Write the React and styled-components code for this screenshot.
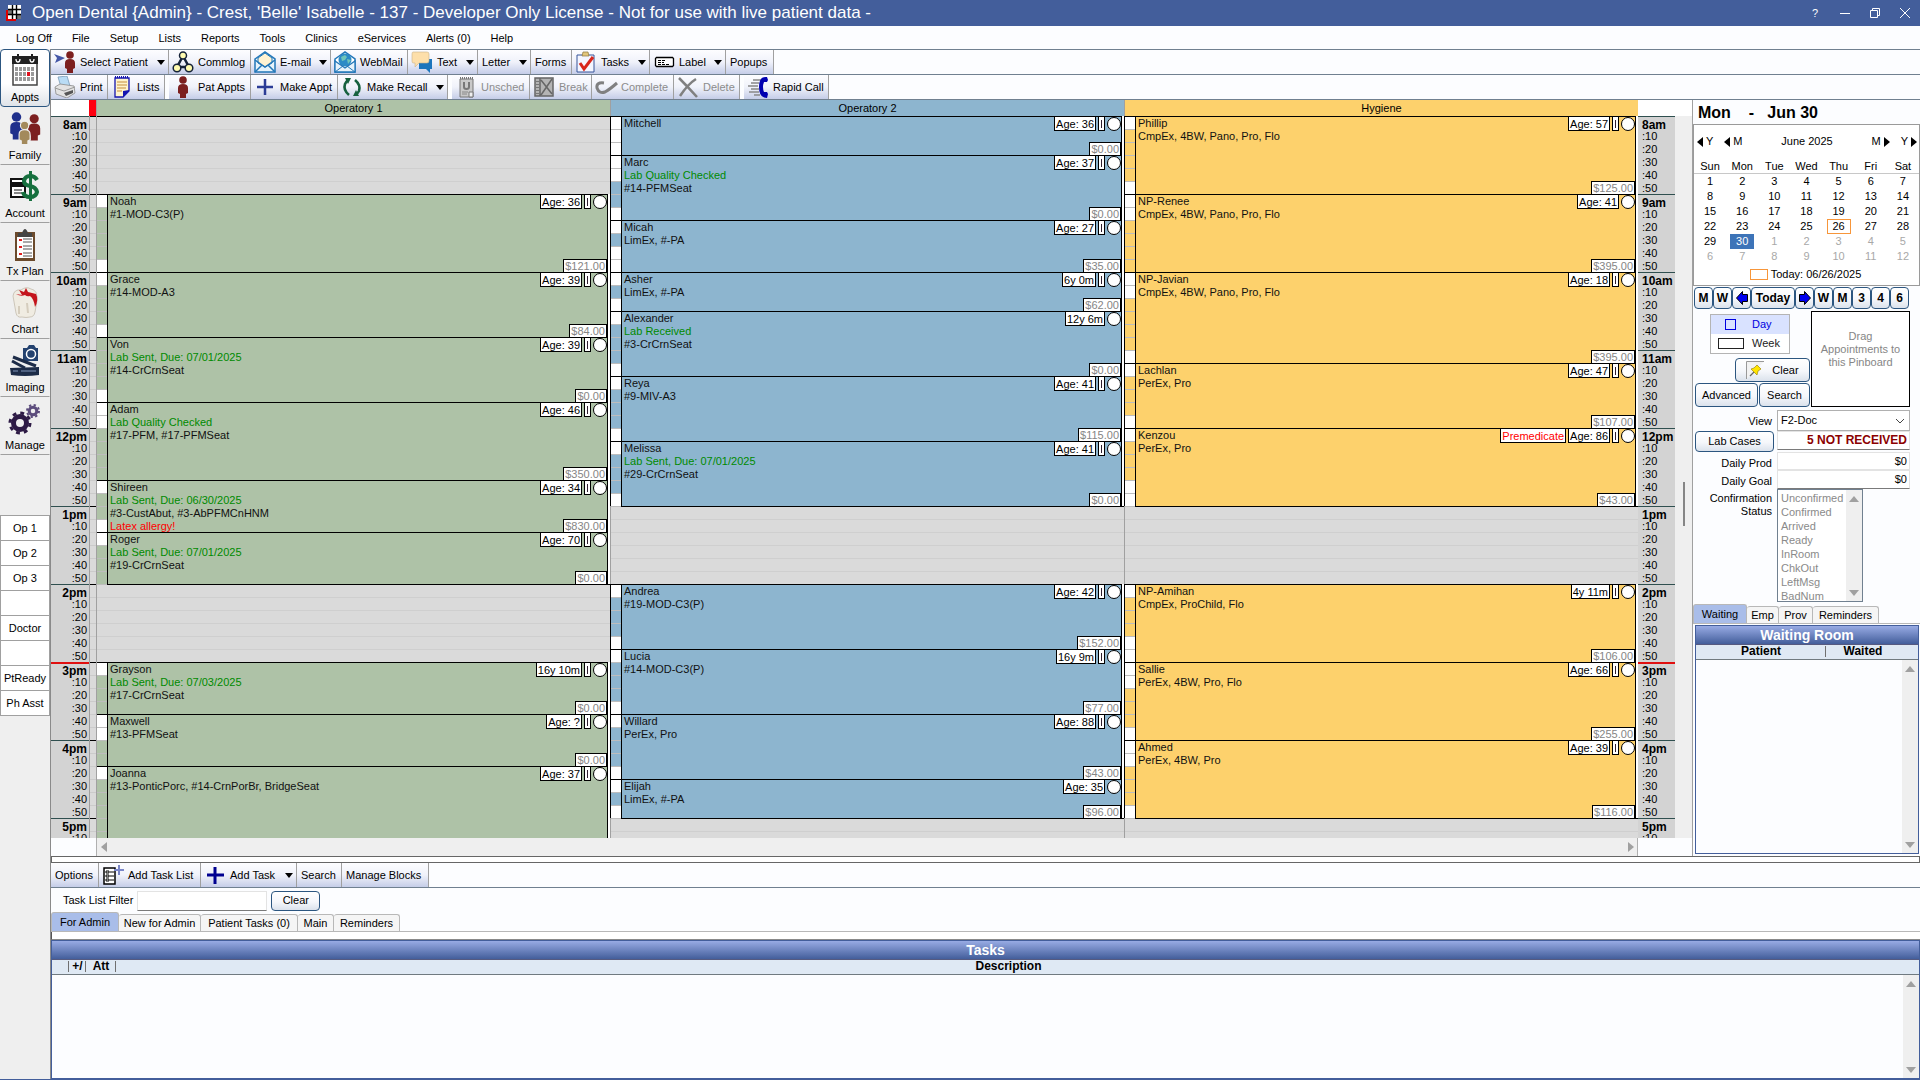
import React from 'react';
import styled, { createGlobalStyle } from 'styled-components';

const GREEN = '#aec2a7';
const BLUE = '#8db5cf';
const YELLOW = '#fdd16c';
const ROW = 13;

const GlobalStyle = createGlobalStyle`
    * {
        box-sizing: border-box;
    }
    body {
        margin: 0;
        overflow: hidden;
        background: #fcfdff;
        color: #000;
        font-family: "Liberation Sans", Arial, sans-serif;
        font-size: 11px;
        line-height: 13px;
    }
    button, input, select {
        font: inherit;
        color: inherit;
        margin: 0;
    }
    button {
        white-space: nowrap;
    }
    svg {
        display: block;
    }
`

const StyledWindow = styled.div`
    display: flex;
    flex-direction: column;
    height: 100vh;
    border-bottom: 1px solid #435e9b;
`

const StyledTitleBar = styled.header`
    display: flex;
    align-items: center;
    flex: 0 0 26px;
    padding: 0 0 0 6px;
    background: #435e9b;
    color: #fff;
`

const StyledTitle = styled.h1`
    flex: 1;
    margin: 0 0 0 11px;
    font-size: 17px;
    line-height: 24px;
    font-weight: normal;
    white-space: nowrap;
`

const StyledWindowButton = styled.button`
    display: flex;
    align-items: center;
    justify-content: center;
    width: 30px;
    height: 26px;
    padding: 0;
    border: 0;
    background: none;
    color: #fff;
`

const StyledMenu = styled.nav`
    display: flex;
    align-items: center;
    flex: 0 0 23px;
    padding-left: 6px;
    background: #fcfdff;
`

const StyledMenuLink = styled.a`
    padding: 1px 10px 0;
    color: #000;
    text-decoration: none;
`

const StyledBody = styled.div`
    display: flex;
    flex: 1;
    min-height: 0;
`

const StyledSidebar = styled.aside`
    flex: 0 0 51px;
    background: #efefef;
    border-right: 1px solid #8a8a8a;
`

const StyledModule = styled.button`
    display: flex;
    flex-direction: column;
    align-items: center;
    justify-content: space-between;
    width: 100%;
    height: 58px;
    padding: 4px 0 2px;
    background: ${props => props.$active ? 'linear-gradient(#fff 60%, #dfe3e8)' : 'none'};
    border: 1px solid ${props => props.$active ? '#2c5680' : 'transparent'};
    border-bottom-color: ${props => props.$active ? '#2c5680' : '#a0a0a0'};
    border-radius: ${props => props.$active ? '4px' : '0'};
`

const StyledShortcuts = styled.div`
    margin-top: 60px;
    border-top: 1px solid #a0a0a0;
`

const StyledShortcut = styled.button`
    display: block;
    width: 100%;
    height: 25px;
    padding: 0;
    background: #fff;
    border: 1px solid #a0a0a0;
    border-top: 0;
`

const StyledMain = styled.main`
    display: flex;
    flex-direction: column;
    flex: 1;
    min-width: 0;
`

const StyledToolbar = styled.div`
    display: flex;
    flex: 0 0 25px;
    background: #fcfdff;
    border-top: ${props => props.$last ? '0' : '1px solid #708090'};
    border-bottom: ${props => props.$last ? '1px solid #708090' : '0'};
`

const StyledToolButton = styled.button`
    display: flex;
    align-items: center;
    flex: 0 0 ${props => props.$width}px;
    height: 24px;
    padding: 0 0 0 ${props => props.$icon ? 0 : 4}px;
    margin-right: ${props => props.$gap || 0}px;
    border: 0;
    border-right: 1px solid #a0a0a0;
    background: linear-gradient(#fdfdff, #f0f2fa 50%, #c5cde8);
    &:disabled {
        color: #8c8c8c;
    }
`

const StyledToolIcon = styled.span`
    display: flex;
    justify-content: center;
    flex: 0 0 29px;
    padding-right: 2px;
`

const StyledCaret = styled.i`
    margin-left: auto;
    margin-right: 3px;
    border: 4px solid transparent;
    border-top: 5px solid #000;
    border-bottom: 0;
`

const StyledUpper = styled.div`
    display: flex;
    flex: 1;
    min-height: 0;
    border-top: 1px solid #708090;
`

const StyledSchedule = styled.section`
    display: flex;
    flex-direction: column;
    flex: 1;
    min-width: 0;
`

const StyledOpHeaders = styled.div`
    display: flex;
    flex: 0 0 16px;
    padding-right: 54px;
    background: #fff;
`

const StyledCorner = styled.div`
    flex: 0 0 45px;
    border-right: 7px solid #ff0010;
`

const StyledOpHeader = styled.div`
    flex: 1;
    text-align: center;
    line-height: 16px;
    background: ${props => props.$color};
    border-left: 1px solid #a0a0a0;
`

const StyledGrid = styled.div`
    display: flex;
    flex: 1;
    min-height: 0;
    overflow: hidden;
`

const StyledTimes = styled.div`
    flex: 0 0 ${props => props.$right ? 37 : 38}px;
    background: #d3d3d3;
    text-align: ${props => props.$right ? 'left' : 'right'};
`

const StyledTime = styled.div`
    height: ${ROW}px;
    padding: ${props => props.$right ? '0 0 0 4px' : '0 2px 0 0'};
    border-top: 1px solid ${props => props.$now ? '#e01010' : props.$hour ? '#2f4f4f' : 'transparent'};
    box-shadow: ${props => props.$now ? 'inset 0 1px #e01010' : 'none'};
    font-size: ${props => props.$hour ? 12 : 11}px;
    font-weight: ${props => props.$hour ? 'bold' : 'normal'};
    line-height: ${props => props.$hour ? 16 : 13}px;
`

const StyledProvColumn = styled.div`
    flex: 0 0 7px;
    border-left: 1px solid #a0a0a0;
    background: repeating-linear-gradient(#000 0 1px, transparent 1px 78px),
        repeating-linear-gradient(#cbcbcb 0 1px, #dadada 1px 13px);
`

const StyledOperatory = styled.div`
    flex: 1;
    min-width: 0;
`

const StyledClosed = styled.div`
    height: ${props => props.$rows * ROW}px;
    border-left: 1px solid #a0a0a0;
    background: linear-gradient(#000 0 1px, transparent 1px),
        repeating-linear-gradient(#cfcfcf 0 1px, #dadada 1px 13px);
`

const StyledAppt = styled.article`
    display: flex;
    height: ${props => props.$rows * ROW}px;
    padding-right: 2px;
    border-left: 1px solid ${props => props.$first ? '#a0a0a0' : '#000'};
    background: #fff;
`

const StyledBar = styled.div`
    flex: 0 0 10px;
    border-top: 1px solid #000;
`

const StyledBarRow = styled.div`
    height: ${ROW}px;
    background: ${props => props.$color};
    border-bottom: 1px solid #bdbdbd;
`

const StyledApptBody = styled.div`
    position: relative;
    flex: 1;
    padding-left: 2px;
    overflow: hidden;
    white-space: nowrap;
    background: ${props => props.$color};
    border: 1px solid #000;
    border-bottom: 0;
`

const StyledApptLine = styled.div`
    color: ${props => props.$color || '#111'};
`

const StyledTags = styled.div`
    position: absolute;
    top: 0;
    right: 0;
    display: flex;
    gap: 2px;
`

const StyledTag = styled.span`
    height: 14px;
    padding: 0 1px;
    line-height: 14px;
    background: #fff;
    border: 1px solid #000;
    border-top: 0;
    color: ${props => props.$color || '#000'};
`

const StyledTick = styled.span`
    width: 7px;
    height: 14px;
    background: linear-gradient(#302030, #302030) center / 1px 8px no-repeat #fff;
    border: 1px solid #000;
    border-top: 0;
`

const StyledCircle = styled.span`
    width: 14px;
    height: 14px;
    background: #fff;
    border: 1px solid #000;
    border-radius: 50%;
`

const StyledAmount = styled.span`
    position: absolute;
    right: 0;
    bottom: 0;
    height: 13px;
    padding: 0 1px;
    line-height: 13px;
    background: #fff;
    border: 1px solid #000;
    border-bottom: 0;
    color: #858585;
`

const StyledVScroll = styled.div`
    display: flex;
    align-items: center;
    justify-content: center;
    flex: 0 0 17px;
    background: #efefef;
`

const StyledThumb = styled.i`
    width: 2px;
    height: 44px;
    margin-bottom: -54px;
    background: #858585;
`

const StyledHScroll = styled.div`
    display: flex;
    align-items: center;
    justify-content: space-between;
    flex: 0 0 18px;
    margin: 0 54px 0 45px;
    padding: 0 3px 0 4px;
    background: #efefef;
    border: 1px solid #b0b0b0;
    border-width: 0 1px;
`

const StyledArrow = styled.i`
    border: 5px solid transparent;
    ${props => props.$dir === 'left' && 'border-right: 6px solid #a0a0a0; border-left: 0;'}
    ${props => props.$dir === 'right' && 'border-left: 6px solid #a0a0a0; border-right: 0;'}
    ${props => props.$dir === 'up' && 'border-bottom: 6px solid #a0a0a0; border-top: 0;'}
    ${props => props.$dir === 'down' && 'border-top: 6px solid #a0a0a0; border-bottom: 0;'}
    ${props => props.$dark && 'border-left-color: #000; border-right-color: #000;'}
`

const StyledPanel = styled.aside`
    display: flex;
    flex-direction: column;
    flex: 0 0 228px;
    border-left: 1px solid #a0a0a0;
    background: #fcfdff;
`

const StyledDate = styled.h2`
    margin: 0;
    padding: 4px 0 2px 5px;
    font-size: 16px;
    line-height: 18px;
    white-space: pre;
`

const StyledCalendar = styled.div`
    flex: 0 0 162px;
    border: 1px solid #9a9a9a;
    background: #fff;
`

const StyledCalNav = styled.div`
    display: flex;
    align-items: center;
    gap: 11px;
    padding: 10px 2px 10px 3px;
`

const StyledNavButton = styled.button`
    display: flex;
    align-items: center;
    gap: 3px;
    padding: 0;
    border: 0;
    background: none;
`

const StyledMonth = styled.span`
    flex: 1;
    text-align: center;
`

const StyledDays = styled.table`
    width: 100%;
    table-layout: fixed;
    border-collapse: collapse;
    text-align: center;
    th {
        padding: 2px 0 0;
        font-weight: normal;
        border-bottom: 1px solid #c8c8c8;
    }
`

const StyledDay = styled.td`
    height: 15px;
    padding: 0;
    color: ${props => props.$other ? '#a8a8a8' : '#000'};
    span {
        display: inline-block;
        width: 24px;
        height: 15px;
        line-height: 15px;
        color: ${props => props.$selected ? '#fff' : 'inherit'};
        background: ${props => props.$selected ? '#3d74b8' : 'none'};
        box-shadow: ${props => props.$today ? 'inset 0 0 0 1px #f7963a' : 'none'};
    }
`

const StyledToday = styled.div`
    display: flex;
    align-items: center;
    justify-content: center;
    gap: 3px;
    padding: 4px 2px 0 0;
    i {
        width: 18px;
        height: 11px;
        border: 1px solid #f7963a;
    }
`

const StyledButton = styled.button`
    display: flex;
    align-items: center;
    justify-content: center;
    gap: 8px;
    width: ${props => props.$width ? props.$width + 'px' : '100%'};
    height: ${props => props.$height || 22}px;
    padding: 0;
    border: 1px solid #2c5680;
    border-radius: 4px;
    background: linear-gradient(#fff, #f5f7fb 55%, #dbe2ec);
    font-size: ${props => props.$bold ? 12 : 11}px;
    font-weight: ${props => props.$bold ? 'bold' : 'normal'};
`

const StyledJumpRow = styled.div`
    display: flex;
    margin: 1px 0 0 1px;
`

const StyledViewTools = styled.div`
    display: flex;
    justify-content: space-between;
    margin: 2px 10px 3px 2px;
`

const StyledViewLeft = styled.div`
    display: flex;
    flex-direction: column;
    align-items: flex-end;
    width: 115px;
    padding-top: 3px;
`

const StyledRange = styled.div`
    width: 80px;
    margin: 0 20px 4px 0;
    border: 1px solid #b4b4b4;
    background: #fff;
`

const StyledRangeOption = styled.button`
    display: flex;
    align-items: center;
    gap: ${props => props.$day ? 16 : 8}px;
    width: 100%;
    height: 19px;
    padding: 0 0 0 ${props => props.$day ? 14 : 7}px;
    border: 0;
    background: ${props => props.$day ? '#d9e2ff' : '#fff'};
    color: ${props => props.$day ? '#0000e0' : '#222'};
    i {
        width: ${props => props.$day ? 11 : 26}px;
        height: 11px;
        border: 1px solid currentColor;
    }
`

const StyledButtonPair = styled.div`
    display: flex;
    justify-content: space-between;
    width: 100%;
    margin-top: 1px;
`

const StyledPinboard = styled.div`
    width: 99px;
    height: 96px;
    padding: 18px 6px;
    border: 1px solid #000;
    background: #fff;
    color: #868686;
    text-align: center;
`

const StyledFields = styled.div`
    display: grid;
    grid-template-columns: 79px 133px;
    grid-template-rows: 21px 21px 18px 19px 113px;
    column-gap: 3px;
    margin-left: 2px;
    text-align: right;
`

const StyledLabel = styled.label`
    padding: ${props => props.$top || 5}px 2px 0 0;
`

const StyledSelect = styled.select`
    width: 100%;
    height: 21px;
    padding: 0 3px;
    border: 1px solid #b0b0b0;
    border-radius: 0;
    appearance: none;
    background: #fff url("data:image/svg+xml,%3Csvg xmlns='http://www.w3.org/2000/svg' width='10' height='6'%3E%3Cpath d='M1 1l4 4 4-4' fill='none' stroke='%23444'/%3E%3C/svg%3E") no-repeat right 4px center;
`

const StyledInput = styled.input`
    width: ${props => props.$width ? props.$width + 'px' : '100%'};
    height: ${props => props.$height || 19}px;
    padding: 0 2px 1px;
    border: 1px solid #e3e3e3;
    border-bottom-color: ${props => props.$flat ? '#e3e3e3' : '#7a7a7a'};
    background: #fff;
    outline: 0;
    text-align: right;
    font-size: ${props => props.$alert ? 12 : 11}px;
    font-weight: ${props => props.$alert ? 'bold' : 'normal'};
    color: ${props => props.$alert ? '#8b0000' : '#000'};
`

const StyledListBox = styled.div`
    display: flex;
    width: 86px;
    height: 113px;
    border: 1px solid #708090;
    background: #fff;
    select {
        flex: 1;
        min-width: 0;
        height: 111px;
        padding: 2px 0 0;
        border: 0;
        outline: 0;
        overflow: hidden;
        background: #fff;
        color: #8a8a8a;
        opacity: 1;
        scrollbar-width: none;
    }
    option {
        padding: 0 0 0 3px;
        min-height: 14px;
        line-height: 14px;
        color: #8a8a8a;
    }
`

const StyledScroll = styled.div`
    display: flex;
    flex-direction: column;
    align-items: center;
    justify-content: space-between;
    flex: 0 0 16px;
    padding: 6px 0 5px;
    background: #efefef;
`

const StyledTabs = styled.div`
    display: flex;
    align-items: flex-end;
    flex: 0 0 19px;
    margin-top: ${props => props.$top || 0}px;
    border-bottom: 1px solid #b8b8b8;
`

const StyledTab = styled.button`
    width: ${props => props.$width}px;
    height: ${props => props.$active ? 19 : 17}px;
    padding: 0;
    border: 1px solid #b8b8b8;
    border-left-width: ${props => props.$active ? 1 : 0}px;
    border-bottom: 0;
    border-radius: 3px 3px 0 0;
    background: ${props => props.$active ? '#a9bde9' : '#f5f5f5'};
`

const StyledFrame = styled.div`
    display: flex;
    flex-direction: column;
    flex: 1;
    margin: ${props => props.$inset ? '1px 1px 2px 2px' : '0'};
    border: 1px solid #435e9b;
    background: #fcfdff;
`

const StyledFrameTitle = styled.h3`
    flex: 0 0 18px;
    margin: 0;
    border-bottom: 1px solid #565a80;
    background: linear-gradient(#98abe4, #435e9b);
    color: #fff;
    font-size: 14px;
    line-height: 18px;
    text-align: center;
`

const StyledColumns = styled.table`
    width: 100%;
    table-layout: fixed;
    border-collapse: collapse;
    background: #dfe9f4;
    border-bottom: 1px solid #707a80;
    th {
        height: 14px;
        padding: 0;
        font-size: 12px;
        line-height: 13px;
        background: linear-gradient(#707070, #707070) right center / 1px 11px no-repeat;
    }
    th:last-child {
        background: none;
        padding-right: ${props => props.$scroll || 0}px;
    }
`

const StyledFrameBody = styled.div`
    display: flex;
    justify-content: flex-end;
    flex: 1;
`

const StyledTasks = styled.section`
    display: flex;
    flex-direction: column;
    flex: 0 0 223px;
`

const StyledSplitter = styled.div`
    flex: 0 0 7px;
    border: 1px solid #666;
    background: #fff;
`

const StyledFilter = styled.form`
    display: flex;
    align-items: center;
    flex: 0 0 24px;
    padding: 1px 0 0 12px;
    gap: 4px;
    input {
        text-align: left;
    }
`

const StyledStrip = styled.div`
    flex: 0 0 8px;
    border-left: 1px solid #555;
    border-bottom: 1px solid #8a8a8a;
    background: #fff;
`

const Svg = ({ w = 22, h = 22, box, children }) => (
    <svg width={w} height={h} viewBox={box || `0 0 ${w} ${h}`} fill="none" aria-hidden="true">{children}</svg>
)

const Person = ({ x = 0, y = 0, color, scale = 1 }) => (
    <g transform={`translate(${x} ${y}) scale(${scale})`} fill={color}>
        <circle cx="6" cy="4" r="3.800" />
        <path d="M1 12q0-4 5-4t5 4v5l-2 1v4H3v-4l-2-1z" />
    </g>
)

const icons = {
    app: (
        <Svg w={15} h={16}>
            <path fill="#fff" d="M2 0h13v14H2z" />
            <path fill="#777" d="M2 5h4v4H2zM11 9h4v5h-4z" />
            <path stroke="#000" strokeWidth="1.400" d="M6.500 0v14M10.500 0v14M2 4.500h13M2 9.500h13" />
            <path stroke="#e00000" strokeWidth="2" d="M1 5v10h9" />
        </Svg>
    ),
    select: <Svg w={24}><path fill="#4457a8" d="M1 3l11 4-10 5 2-5z" /><Person x={11} color="#7c1f1f" /></Svg>,
    person: <Svg><Person x={5} color="#7c1f1f" /></Svg>,
    commlog: (
        <Svg>
            <path stroke="#152238" strokeWidth="2.500" d="M11 5L5 16h12z" />
            <g fill="#fffbb0" stroke="#152238" strokeWidth="1.500">
                <circle cx="11" cy="4.500" r="3.500" /><circle cx="5" cy="17" r="3.800" /><circle cx="17" cy="17" r="3.800" />
            </g>
        </Svg>
    ),
    email: (
        <Svg>
            <path fill="#e6f3fb" stroke="#2277b8" strokeWidth="1.500" d="M1 8l10-7 10 7v13H1z" />
            <path fill="#fff3d2" stroke="#2277b8" d="M4 7l7-5 7 5v5l-7 4-7-4z" />
            <path stroke="#2277b8" strokeWidth="1.500" d="M1 21l7-7M21 21l-7-7M1 9l10 7 10-7" />
        </Svg>
    ),
    webmail: (
        <Svg>
            <path fill="#fff" stroke="#2277b8" strokeWidth="1.500" d="M1 8l10-7 10 7v13H1z" />
            <circle cx="11" cy="9" r="6.500" fill="#2b8bc6" />
            <path fill="#6fc5b8" d="M7 6l4-2 2 2-2 3-3 1zM13 8l4 1-3 4z" />
            <path fill="#e6f3fb" stroke="#2277b8" strokeWidth="1.300" d="M1 21V10l10 7 10-7v11z" />
            <path stroke="#2277b8" d="M1 21l8-6M21 21l-8-6" />
        </Svg>
    ),
    text: (
        <Svg>
            <path fill="#1c75bc" d="M8 8h13v10h-2v4l-4-4H8z" />
            <path fill="#fddfaa" stroke="#c9b48a" strokeWidth=".6" d="M2 1h14q2 0 2 2v7q0 2-2 2H8l-4 4v-4H2q-1 0-1-2V3q0-2 1-2z" />
        </Svg>
    ),
    tasks: (
        <Svg>
            <path fill="#f4f6ff" stroke="#36549a" d="M2 4h17v17H2z" />
            <path fill="#e2c67c" stroke="#8c753c" strokeWidth=".7" d="M7 5l1-4h5l1 4z" />
            <path stroke="#d9261c" strokeWidth="3" d="M5 12l4 6 9-12" />
        </Svg>
    ),
    label: <Svg><path fill="#fff" stroke="#000" strokeWidth="1.300" d="M3.500 6.500h16l1 1v7l-1 1h-16l-1-1v-7z" /><path stroke="#000" strokeDasharray="3 1" d="M5 9.500h8M5 11.500h6M5 13.500h12" /></Svg>,
    print: (
        <Svg>
            <path fill="#b9dcf5" stroke="#6b8fae" strokeWidth=".7" d="M4 1l9-1 3 10-9 1z" />
            <path fill="#e3e3e3" stroke="#8a8a8a" strokeWidth=".8" d="M1 11l5-3 14 2 1 7-8 5-11-4z" />
            <path fill="#555" d="M10 17l9-3v3l-7 3z" /><path stroke="#999" d="M1 12l9 3 11-4" />
        </Svg>
    ),
    lists: (
        <Svg>
            <path fill="#fff4cc" stroke="#1515b0" strokeWidth="1.300" d="M4 2h14v13l-6 6H4z" />
            <path fill="#1515b0" d="M18 14v1l-6 6v-6z" /><path stroke="#1515b0" strokeDasharray="1 1" strokeWidth="2" d="M4 1h14" />
            <path stroke="#c58d3c" d="M6 6h10M6 9h10M6 12h9M6 15h5" />
        </Svg>
    ),
    plus: <Svg><path stroke="#2b3c96" strokeWidth="2.500" d="M11 3v16M3 11h16" /></Svg>,
    recall: (
        <Svg>
            <path stroke="#17613f" strokeWidth="2.600" d="M8 19Q2 14 4 8q1-2 3-4M14 4q6 5 4 11-1 2-3 3" />
            <path fill="#17613f" d="M4 2h6l-3 6zM18 20h-6l3-6z" />
        </Svg>
    ),
    unsched: <Svg><path fill="#c9c9c9" stroke="#777" d="M5 3h13v18H5z" /><path stroke="#777" strokeWidth="2" strokeDasharray="1 1" d="M5 2h13" /><path stroke="#777" strokeWidth="2" d="M9 6v5q0 2 2.500 2T14 11V6" /><path stroke="#888" d="M7 16h6M7 18h5" /><path fill="#eee" stroke="#777" d="M14 16h4v5h-4z" /></Svg>,
    break: <Svg><path fill="#b4b4b4" stroke="#666" strokeWidth="1.500" d="M2 2h18v18H2z" /><path stroke="#666" strokeWidth="1.500" d="M7 2v18M8 4l11 14M19 3L8 19" /><path stroke="#777" strokeWidth="3" strokeDasharray="1 2" d="M4.500 2v18" /></Svg>,
    complete: <Svg w={24}><path stroke="#808080" strokeWidth="3" d="M10 7Q2 6 3 12q2 6 8 4 4-2 12-9" /></Svg>,
    delete: <Svg w={24}><path stroke="#808080" strokeWidth="2.500" d="M3 2q9 9 18 19M20 3Q12 8 4 20" /></Svg>,
    rapid: (
        <Svg>
            <path stroke="#888" strokeWidth="1.300" d="M6 4h8M4 7h8M1 10h10M4 13h8M2 16h10M7 19h6" />
            <path fill="#0000b0" d="M20 1q-8-1-8 10t8 11l1-4-1-2h-3q-2-5 0-10h3l1-2z" />
        </Svg>
    ),
    taskList: (
        <Svg>
            <path fill="#fff" stroke="#000" strokeWidth="1.500" d="M2 4h11v16H2z" />
            <path stroke="#000" d="M4 7h3v2H4zM4 11h3v2H4zM4 15h3v2H4zM8 8h4M8 12h4M8 16h4" />
            <path stroke="#7a86c8" strokeWidth="2" d="M17 1v10M12 6h10" />
        </Svg>
    ),
    addTask: <Svg><path stroke="#000090" strokeWidth="3" d="M11 3v17M3 11h17" /></Svg>,
    pin: (
        <Svg w={18} h={18}>
            <path fill="#f2f2f2" stroke="#999" d="M.5 18V.5H18" />
            <path stroke="#666" strokeWidth="1.300" d="M4 15l5-5" />
            <path fill="#ffe400" stroke="#a08a10" strokeWidth=".7" d="M5 8l3-1 3-3 4 4-3 2-1 4z" />
        </Svg>
    ),
    appts: (
        <Svg w={32} h={32}>
            <path fill="#fff" stroke="#444" strokeWidth="1.500" d="M4 4h24v27H4z" />
            <path fill="#222" d="M3 2h26v8H3z" />
            <path stroke="#fff" strokeWidth="1.300" d="M7 5q0 3 2 3t2-3M21 5q0 3 2 3t2-3" />
            <path stroke="#222" strokeWidth="2" d="M9 0v6M23 0v6" />
            {[0, 1, 2].map(r => [0, 1, 2, 3, 4].map(c => (
                <path key={`${r}${c}`} fill={r === 1 && c === 3 ? '#e0101c' : '#9a9a9a'} d={`M${6 + c * 4} ${13 + r * 5}h3v4h-3z`} />
            )))}
        </Svg>
    ),
    family: (
        <Svg w={32} h={32}>
            <Person x={0} color="#20308c" scale={1.25} />
            <Person x={18} y={2} color="#7c1f1f" scale={1.2} />
            <g stroke="#efefef" strokeWidth="1"><Person x={9} y={9} color="#a38a5c" scale={1.1} /></g>
        </Svg>
    ),
    account: (
        <Svg w={34} h={32}>
            <path fill="#fff" stroke="#111" strokeWidth="2" d="M3 9h14v18H3z" />
            <path fill="#111" d="M3 12h14v5H3z" /><path stroke="#111" d="M6 20h8M6 23h8" />
            <path stroke="#efefef" strokeWidth="8" d="M22 3v27" />
            <path stroke="#16703e" strokeWidth="4" d="M29 10q-2-4-7-4t-6 5q0 4 6 5t7 6q-1 5-7 5t-7-5" />
            <path stroke="#16703e" strokeWidth="3" d="M22.500 1v30" />
        </Svg>
    ),
    txplan: (
        <Svg w={32} h={34}>
            <path fill="#6b4a2c" d="M6 4h20v29H6z" /><path fill="#fff" d="M8 9h16v21H8z" />
            <path fill="#444" d="M9 9V5h4q3-8 6 0h4v4z" />
            <path stroke="#e02020" strokeWidth="2" d="M10 12h3M10 19h3M10 26h3" />
            <path stroke="#555" d="M14 11h9M14 14h9M14 18h9M14 21h9M14 25h9M14 28h9" />
        </Svg>
    ),
    chart: (
        <Svg w={30} h={32}>
            <path fill="#f0ece2" stroke="#bdb5a5" strokeWidth=".7" d="M3 10Q4 3 11 4q5-4 10-1 7 1 6 12l-2 11q-1 5-5 5-4 1-8 0-5 1-6-4z" />
            <path fill="#c4141c" d="M6 8l6 1-3-5 5 2 2-4 2 4 8 2q3 6-1 13-1-8-5-11-3 1-5-1-4 2-9-1z" />
            <path stroke="#d5cdbd" strokeWidth="2" d="M9 20v8M17 17l1 10" />
        </Svg>
    ),
    imaging: (
        <Svg w={32} h={34}>
            <path fill="#24426f" d="M14 4h4l2-3h5l2 3h2v13H14z" />
            <circle cx="22" cy="10" r="4.500" fill="#24426f" stroke="#fff" strokeWidth="1.500" />
            <path stroke="#1d2c48" strokeWidth="3" d="M4 13l23 9M3 17l13 7" />
            <path fill="#1d2c48" d="M1 24l29-1v8q-14 2-28 0z" /><path stroke="#8094b8" d="M4 27h5M12 27h15" />
        </Svg>
    ),
    manage: (
        <Svg w={34} h={34}>
            <circle cx="12" cy="21" r="6.500" stroke="#2d1a45" strokeWidth="5" />
            <circle cx="12" cy="21" r="10" stroke="#2d1a45" strokeWidth="3" strokeDasharray="3.850 4" />
            <circle cx="25" cy="9" r="3.800" stroke="#5c4c7c" strokeWidth="3" />
            <circle cx="25" cy="9" r="6" stroke="#5c4c7c" strokeWidth="2" strokeDasharray="2.300 2.400" />
        </Svg>
    ),
    next: <Svg w={14} h={14}><path fill="#0000f0" stroke="#000" d="M1.500 3.500h5v-3l6 6.500-6 6.500v-3h-5z" /></Svg>,
    prev: <Svg w={14} h={14}><path fill="#0000f0" stroke="#000" d="M12.500 3.500h-5v-3L1.500 7l6 6.500v-3h5z" /></Svg>,
}

const menuItems = ['Log Off', 'File', 'Setup', 'Lists', 'Reports', 'Tools', 'Clinics', 'eServices', 'Alerts (0)', 'Help'];

const modules = [
    ['Appts', 'appts'], ['Family', 'family'], ['Account', 'account'], ['Tx Plan', 'txplan'],
    ['Chart', 'chart'], ['Imaging', 'imaging'], ['Manage', 'manage'],
];

const shortcuts = ['Op 1', 'Op 2', 'Op 3', '', 'Doctor', '', 'PtReady', 'Ph Asst'];

const mainTools = [
    { label: 'Select Patient', icon: 'select', width: 118, menu: true },
    { label: 'Commlog', icon: 'commlog', width: 82 },
    { label: 'E-mail', icon: 'email', width: 80, menu: true },
    { label: 'WebMail', icon: 'webmail', width: 77 },
    { label: 'Text', icon: 'text', width: 70, menu: true },
    { label: 'Letter', width: 53, menu: true },
    { label: 'Forms', width: 41 },
    { label: 'Tasks', icon: 'tasks', width: 78, menu: true },
    { label: 'Label', icon: 'label', width: 76, menu: true },
    { label: 'Popups', width: 48 },
];

const apptTools = [
    { label: 'Print', icon: 'print', width: 57 },
    { label: 'Lists', icon: 'lists', width: 57, gap: 4 },
    { label: 'Pat Appts', icon: 'person', width: 82 },
    { label: 'Make Appt', icon: 'plus', width: 87 },
    { label: 'Make Recall', icon: 'recall', width: 110, menu: true, gap: 4 },
    { label: 'Unsched', icon: 'unsched', width: 78, disabled: true },
    { label: 'Break', icon: 'break', width: 62, disabled: true },
    { label: 'Complete', icon: 'complete', width: 82, disabled: true },
    { label: 'Delete', icon: 'delete', width: 66, disabled: true, gap: 4 },
    { label: 'Rapid Call', icon: 'rapid', width: 85 },
];

const taskTools = [
    { label: 'Options', width: 48 },
    { label: 'Add Task List', icon: 'taskList', width: 102 },
    { label: 'Add Task', icon: 'addTask', width: 96, menu: true },
    { label: 'Search', width: 45 },
    { label: 'Manage Blocks', width: 87 },
];

// bar: w = open time, x = provider time, one letter per ten minutes
const closed = rows => ({ closed: rows });
const appt = (name, bar, age, amount, procs, extra) => ({ name, bar, age, amount, procs, ...extra });

const operatories = [
    {
        name: 'Operatory 1',
        color: GREEN,
        items: [
            closed(6),
            appt('Noah', 'wxxxxw', 'Age: 36', '$121.00', '#1-MOD-C3(P)'),
            appt('Grace', 'wxxxw', 'Age: 39', '$84.00', '#14-MOD-A3'),
            appt('Von', 'xxxxw', 'Age: 39', '$0.00', '#14-CrCrnSeat', { lab: 'Lab Sent, Due: 07/01/2025' }),
            appt('Adam', 'wwxxxx', 'Age: 46', '$350.00', '#17-PFM, #17-PFMSeat', { lab: 'Lab Quality Checked' }),
            appt('Shireen', 'wxxw', 'Age: 34', '$830.00', '#3-CustAbut, #3-AbPFMCnHNM', { lab: 'Lab Sent, Due: 06/30/2025', alert: 'Latex allergy!' }),
            appt('Roger', 'wxxx', 'Age: 70', '$0.00', '#19-CrCrnSeat', { lab: 'Lab Sent, Due: 07/01/2025' }),
            closed(6),
            appt('Grayson', 'wxxx', '16y 10m', '$0.00', '#17-CrCrnSeat', { lab: 'Lab Sent, Due: 07/03/2025' }),
            appt('Maxwell', 'wwxx', 'Age: ?', '$0.00', '#13-PFMSeat'),
            appt('Joanna', 'wxxxxxxx', 'Age: 37', null, '#13-PonticPorc, #14-CrnPorBr, BridgeSeat'),
        ],
    },
    {
        name: 'Operatory 2',
        color: BLUE,
        items: [
            appt('Mitchell', 'www', 'Age: 36', '$0.00', ''),
            appt('Marc', 'wwxxw', 'Age: 37', '$0.00', '#14-PFMSeat', { lab: 'Lab Quality Checked' }),
            appt('Micah', 'wxww', 'Age: 27', '$35.00', 'LimEx, #-PA'),
            appt('Asher', 'wxw', '6y 0m', '$62.00', 'LimEx, #-PA'),
            appt('Alexander', 'wxxxw', '12y 6m', '$0.00', '#3-CrCrnSeat', { lab: 'Lab Received', noTick: true }),
            appt('Reya', 'wxxxw', 'Age: 41', '$115.00', '#9-MIV-A3'),
            appt('Melissa', 'wxxxw', 'Age: 41', '$0.00', '#29-CrCrnSeat', { lab: 'Lab Sent, Due: 07/01/2025' }),
            closed(6),
            appt('Andrea', 'wxxxw', 'Age: 42', '$152.00', '#19-MOD-C3(P)'),
            appt('Lucia', 'wxxxw', '16y 9m', '$77.00', '#14-MOD-C3(P)'),
            appt('Willard', 'wxxxw', 'Age: 88', '$43.00', 'PerEx, Pro'),
            appt('Elijah', 'wxw', 'Age: 35', '$96.00', 'LimEx, #-PA', { noTick: true }),
            closed(3),
        ],
    },
    {
        name: 'Hygiene',
        color: YELLOW,
        items: [
            appt('Phillip', 'wxxxxw', 'Age: 57', '$125.00', 'CmpEx, 4BW, Pano, Pro, Flo'),
            appt('NP-Renee', 'wwxxxx', 'Age: 41', '$395.00', 'CmpEx, 4BW, Pano, Pro, Flo', { noTick: true }),
            appt('NP-Javian', 'wwxxxxw', 'Age: 18', '$395.00', 'CmpEx, 4BW, Pano, Pro, Flo'),
            appt('Lachlan', 'wxxxw', 'Age: 47', '$107.00', 'PerEx, Pro'),
            appt('Kenzou', 'wxxxww', 'Age: 86', '$43.00', 'PerEx, Pro', { flag: 'Premedicate' }),
            closed(6),
            appt('NP-Amihan', 'wxxxww', '4y 11m', '$106.00', 'CmpEx, ProChild, Flo'),
            appt('Sallie', 'wwxxxw', 'Age: 66', '$255.00', 'PerEx, 4BW, Pro, Flo'),
            appt('Ahmed', 'wwxxxw', 'Age: 39', '$116.00', 'PerEx, 4BW, Pro'),
            closed(3),
        ],
    },
];

const hours = ['8am', '9am', '10am', '11am', '12pm', '1pm', '2pm', '3pm', '4pm', '5pm'];
const minutes = ['', ':10', ':20', ':30', ':40', ':50'];
const times = hours.flatMap(hour => minutes.map(minute => ({ hour, minute }))).slice(0, 56);
const weekdays = ['Sun', 'Mon', 'Tue', 'Wed', 'Thu', 'Fri', 'Sat'];
const weeks = [0, 1, 2, 3, 4, 5].map(w => weekdays.map((_, d) => w * 7 + d + 1));
const statuses = ['Unconfirmed', 'Confirmed', 'Arrived', 'Ready', 'InRoom', 'ChkOut', 'LeftMsg', 'BadNum'];

const Toolbar = ({ tools, last }) => (
    <StyledToolbar $last={last}>
        {tools.map(tool => (
            <StyledToolButton key={tool.label} $width={tool.width} $gap={tool.gap} $icon={!!tool.icon} disabled={tool.disabled}>
                {tool.icon && <StyledToolIcon>{icons[tool.icon]}</StyledToolIcon>}
                {tool.label}
                {tool.menu && <StyledCaret />}
            </StyledToolButton>
        ))}
    </StyledToolbar>
)

const Times = ({ right }) => (
    <StyledTimes $right={right}>
        {times.map(({ hour, minute }) => (
            <StyledTime key={hour + minute} $right={right} $hour={!minute} $now={hour === '3pm' && !minute}>
                {minute || hour}
            </StyledTime>
        ))}
    </StyledTimes>
)

const Appointment = ({ item, color, first }) => (
    <StyledAppt $rows={item.bar.length} $first={first}>
        <StyledBar>
            {item.bar.split('').map((slot, i) => (
                <StyledBarRow key={i} $color={slot === 'x' ? color : '#fff'} />
            ))}
        </StyledBar>
        <StyledApptBody $color={color}>
            <StyledApptLine>{item.name}</StyledApptLine>
            {item.lab && <StyledApptLine $color="#008a00">{item.lab}</StyledApptLine>}
            <StyledApptLine>{item.procs}</StyledApptLine>
            {item.alert && <StyledApptLine $color="#ff0000">{item.alert}</StyledApptLine>}
            <StyledTags>
                {item.flag && <StyledTag $color="#ff0000">{item.flag}</StyledTag>}
                <StyledTag>{item.age}</StyledTag>
                {!item.noTick && <StyledTick />}
                <StyledCircle />
            </StyledTags>
            {item.amount && <StyledAmount>{item.amount}</StyledAmount>}
        </StyledApptBody>
    </StyledAppt>
)

const Schedule = () => (
    <StyledSchedule>
        <StyledOpHeaders>
            <StyledCorner />
            {operatories.map(op => <StyledOpHeader key={op.name} $color={op.color}>{op.name}</StyledOpHeader>)}
        </StyledOpHeaders>
        <StyledGrid>
            <Times />
            <StyledProvColumn />
            {operatories.map((op, index) => (
                <StyledOperatory key={op.name}>
                    {op.items.map((item, i) => item.closed
                        ? <StyledClosed key={i} $rows={item.closed} />
                        : <Appointment key={i} item={item} color={op.color} first={index === 0} />)}
                </StyledOperatory>
            ))}
            <Times right />
            <StyledVScroll><StyledThumb /></StyledVScroll>
        </StyledGrid>
        <StyledHScroll>
            <StyledArrow $dir="left" />
            <StyledArrow $dir="right" />
        </StyledHScroll>
    </StyledSchedule>
)

const Calendar = () => (
    <StyledCalendar>
        <StyledCalNav>
            <StyledNavButton><StyledArrow $dir="left" $dark />Y</StyledNavButton>
            <StyledNavButton><StyledArrow $dir="left" $dark />M</StyledNavButton>
            <StyledMonth>June 2025</StyledMonth>
            <StyledNavButton>M<StyledArrow $dir="right" $dark /></StyledNavButton>
            <StyledNavButton>Y<StyledArrow $dir="right" $dark /></StyledNavButton>
        </StyledCalNav>
        <StyledDays>
            <thead>
                <tr>{weekdays.map(day => <th key={day}>{day}</th>)}</tr>
            </thead>
            <tbody>
                {weeks.map(week => (
                    <tr key={week[0]}>
                        {week.map(day => (
                            <StyledDay key={day} $other={day > 30} $selected={day === 30} $today={day === 26}>
                                <span>{day > 30 ? day - 30 : day}</span>
                            </StyledDay>
                        ))}
                    </tr>
                ))}
            </tbody>
        </StyledDays>
        <StyledToday><i />Today: 06/26/2025</StyledToday>
    </StyledCalendar>
)

const Panel = () => (
    <StyledPanel>
        <StyledDate>{'Mon    -   Jun 30'}</StyledDate>
        <Calendar />
        <StyledJumpRow>
            <StyledButton $bold $width={19}>M</StyledButton>
            <StyledButton $bold $width={19}>W</StyledButton>
            <StyledButton $bold $width={19} aria-label="Previous day">{icons.prev}</StyledButton>
            <StyledButton $bold $width={44}>Today</StyledButton>
            <StyledButton $bold $width={19} aria-label="Next day">{icons.next}</StyledButton>
            {['W', 'M', '3', '4', '6'].map(text => <StyledButton key={text} $bold $width={19}>{text}</StyledButton>)}
        </StyledJumpRow>
        <StyledViewTools>
            <StyledViewLeft>
                <StyledRange>
                    <StyledRangeOption $day><i />Day</StyledRangeOption>
                    <StyledRangeOption><i />Week</StyledRangeOption>
                </StyledRange>
                <StyledButton $width={75} $height={24}>{icons.pin}Clear</StyledButton>
                <StyledButtonPair>
                    <StyledButton $width={63} $height={24}>Advanced</StyledButton>
                    <StyledButton $width={51} $height={24}>Search</StyledButton>
                </StyledButtonPair>
            </StyledViewLeft>
            <StyledPinboard>Drag Appointments to this Pinboard</StyledPinboard>
        </StyledViewTools>
        <StyledFields>
            <StyledLabel htmlFor="view">View</StyledLabel>
            <StyledSelect id="view" defaultValue="F2-Doc"><option>F2-Doc</option></StyledSelect>
            <StyledButton $height={21}>Lab Cases</StyledButton>
            <StyledInput aria-label="Lab cases" $alert readOnly value="5 NOT RECEIVED" />
            <StyledLabel htmlFor="prod">Daily Prod</StyledLabel>
            <StyledInput id="prod" $flat $height={18} readOnly value="$0" />
            <StyledLabel htmlFor="goal">Daily Goal</StyledLabel>
            <StyledInput id="goal" readOnly value="$0" />
            <StyledLabel htmlFor="status" $top={3}>Confirmation<br />Status</StyledLabel>
            <StyledListBox>
                <select id="status" size={8} disabled>
                    {statuses.map(status => <option key={status}>{status}</option>)}
                </select>
                <StyledScroll><StyledArrow $dir="up" /><StyledArrow $dir="down" /></StyledScroll>
            </StyledListBox>
        </StyledFields>
        <StyledTabs $top={2}>
            <StyledTab $active $width={54}>Waiting</StyledTab>
            <StyledTab $width={32}>Emp</StyledTab>
            <StyledTab $width={34}>Prov</StyledTab>
            <StyledTab $width={66}>Reminders</StyledTab>
        </StyledTabs>
        <StyledFrame $inset>
            <StyledFrameTitle>Waiting Room</StyledFrameTitle>
            <StyledColumns $scroll={18}>
                <colgroup><col width="130" /><col /></colgroup>
                <thead><tr><th>Patient</th><th>Waited</th></tr></thead>
            </StyledColumns>
            <StyledFrameBody>
                <StyledScroll><StyledArrow $dir="up" /><StyledArrow $dir="down" /></StyledScroll>
            </StyledFrameBody>
        </StyledFrame>
    </StyledPanel>
)

const Tasks = () => (
    <StyledTasks>
        <StyledSplitter />
        <Toolbar tools={taskTools} last />
        <StyledFilter onSubmit={e => e.preventDefault()}>
            <label htmlFor="filter">Task List Filter</label>
            <StyledInput id="filter" $width={130} $height={20} />
            <StyledButton type="button" $width={49} $height={20}>Clear</StyledButton>
        </StyledFilter>
        <StyledTabs>
            <StyledTab $active $width={68}>For Admin</StyledTab>
            <StyledTab $width={82}>New for Admin</StyledTab>
            <StyledTab $width={97}>Patient Tasks (0)</StyledTab>
            <StyledTab $width={36}>Main</StyledTab>
            <StyledTab $width={66}>Reminders</StyledTab>
        </StyledTabs>
        <StyledStrip />
        <StyledFrame>
            <StyledFrameTitle>Tasks</StyledFrameTitle>
            <StyledColumns $scroll={18}>
                <colgroup><col width="17" /><col width="17" /><col width="30" /><col /></colgroup>
                <thead><tr><th /><th>+/</th><th>Att</th><th>Description</th></tr></thead>
            </StyledColumns>
            <StyledFrameBody>
                <StyledScroll><StyledArrow $dir="up" /><StyledArrow $dir="down" /></StyledScroll>
            </StyledFrameBody>
        </StyledFrame>
    </StyledTasks>
)

const App = () => {
    return (
        <StyledWindow>
            <GlobalStyle />
            <StyledTitleBar>
                {icons.app}
                <StyledTitle>Open Dental {'{Admin}'} - Crest, 'Belle' Isabelle - 137 - Developer Only License - Not for use with live patient data -</StyledTitle>
                <StyledWindowButton>?</StyledWindowButton>
                <StyledWindowButton aria-label="Minimize"><Svg w={10} h={10}><path stroke="#fff" d="M0 5.500h10" /></Svg></StyledWindowButton>
                <StyledWindowButton aria-label="Restore"><Svg w={10} h={10}><path stroke="#fff" d="M.5 2.500h7v7h-7zM2.500 2.500v-2h7v7h-2" /></Svg></StyledWindowButton>
                <StyledWindowButton aria-label="Close"><Svg w={10} h={10}><path stroke="#fff" d="M0 0l10 10M10 0L0 10" /></Svg></StyledWindowButton>
            </StyledTitleBar>
            <StyledMenu>
                {menuItems.map(item => <StyledMenuLink key={item} href="#">{item}</StyledMenuLink>)}
            </StyledMenu>
            <StyledBody>
                <StyledSidebar>
                    {modules.map(([label, icon], i) => (
                        <StyledModule key={label} $active={i === 0}>{icons[icon]}{label}</StyledModule>
                    ))}
                    <StyledShortcuts>
                        {shortcuts.map((label, i) => <StyledShortcut key={i}>{label}</StyledShortcut>)}
                    </StyledShortcuts>
                </StyledSidebar>
                <StyledMain>
                    <Toolbar tools={mainTools} />
                    <Toolbar tools={apptTools} />
                    <StyledUpper>
                        <Schedule />
                        <Panel />
                    </StyledUpper>
                    <Tasks />
                </StyledMain>
            </StyledBody>
        </StyledWindow>
    )
}

export default App;
